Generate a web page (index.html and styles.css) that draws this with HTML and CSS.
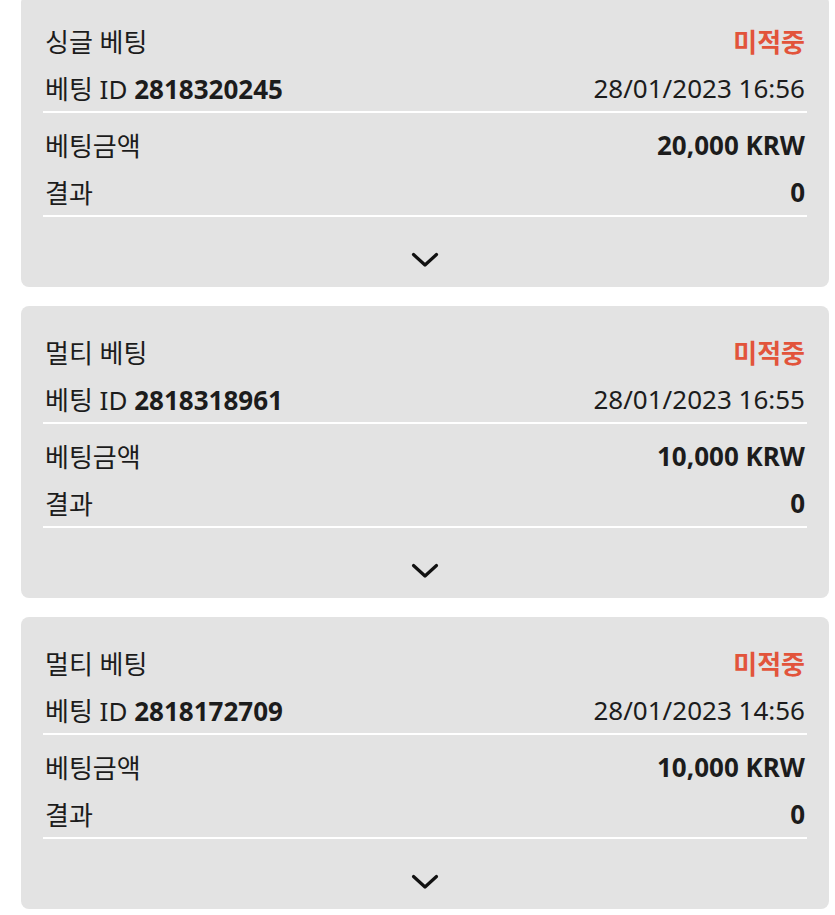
FILE: index.html
```html
<!DOCTYPE html>
<html lang="ko">
<head>
    <meta charset="UTF-8">
    <meta name="viewport" content="width=device-width, initial-scale=1.0">
    <title>베팅 내역</title>
    <link rel="stylesheet" href="styles.css">
</head>
<body>
    <section class="bet-list">
        <div class="bet-card">
            <div class="bet-head">
                <div class="row">
                    <span>싱글 베팅</span>
                    <span class="status">미적중</span>
                </div>
                <div class="row">
                    <span>베팅 ID <b>2818320245</b></span>
                    <span>28/01/2023 16:56</span>
                </div>
            </div>
            <div class="bet-body">
                <div class="row">
                    <span>베팅금액</span>
                    <b>20,000 KRW</b>
                </div>
                <div class="row">
                    <span>결과</span>
                    <b>0</b>
                </div>
            </div>
            <div class="bet-toggle">
                <svg width="28" height="16" viewBox="0 0 28 16"><polyline points="2.5,2.5 14,13 25.5,2.5" fill="none" stroke="#111" stroke-width="3.2" stroke-linecap="round" stroke-linejoin="round"/></svg>
            </div>
        </div>

        <div class="bet-card">
            <div class="bet-head">
                <div class="row">
                    <span>멀티 베팅</span>
                    <span class="status">미적중</span>
                </div>
                <div class="row">
                    <span>베팅 ID <b>2818318961</b></span>
                    <span>28/01/2023 16:55</span>
                </div>
            </div>
            <div class="bet-body">
                <div class="row">
                    <span>베팅금액</span>
                    <b>10,000 KRW</b>
                </div>
                <div class="row">
                    <span>결과</span>
                    <b>0</b>
                </div>
            </div>
            <div class="bet-toggle">
                <svg width="28" height="16" viewBox="0 0 28 16"><polyline points="2.5,2.5 14,13 25.5,2.5" fill="none" stroke="#111" stroke-width="3.2" stroke-linecap="round" stroke-linejoin="round"/></svg>
            </div>
        </div>

        <div class="bet-card">
            <div class="bet-head">
                <div class="row">
                    <span>멀티 베팅</span>
                    <span class="status">미적중</span>
                </div>
                <div class="row">
                    <span>베팅 ID <b>2818172709</b></span>
                    <span>28/01/2023 14:56</span>
                </div>
            </div>
            <div class="bet-body">
                <div class="row">
                    <span>베팅금액</span>
                    <b>10,000 KRW</b>
                </div>
                <div class="row">
                    <span>결과</span>
                    <b>0</b>
                </div>
            </div>
            <div class="bet-toggle">
                <svg width="28" height="16" viewBox="0 0 28 16"><polyline points="2.5,2.5 14,13 25.5,2.5" fill="none" stroke="#111" stroke-width="3.2" stroke-linecap="round" stroke-linejoin="round"/></svg>
            </div>
        </div>
    </section>
</body>
</html>
```

FILE: styles.css
```css
body {
    margin: 0;
    padding: 0;
    background: #fff;
    color: #1c1c1c;
    font-family: "Noto Sans", "Noto Sans CJK KR", sans-serif;
    font-size: 26px;
}
.bet-list {
    display: flex;
    flex-direction: column;
    gap: 19px;
    margin-top: -5px;
    padding: 0 6px 0 21px;
}
.bet-card {
    background: #e3e3e3;
    border-radius: 8px;
    padding: 0 22px;
}
.row {
    display: flex;
    justify-content: space-between;
    align-items: center;
    height: 47px;
    padding: 0 2px;
}
.row b {
    font-weight: 700;
}
.bet-head {
    padding-top: 22px;
    border-bottom: 2px solid #fff;
}
.bet-body {
    padding-top: 8px;
    border-bottom: 2px solid #fff;
}
.status {
    color: #e2543b;
    font-weight: 700;
}
.bet-toggle {
    display: flex;
    justify-content: center;
    height: 70px;
    padding-top: 35px;
    box-sizing: border-box;
}
```
